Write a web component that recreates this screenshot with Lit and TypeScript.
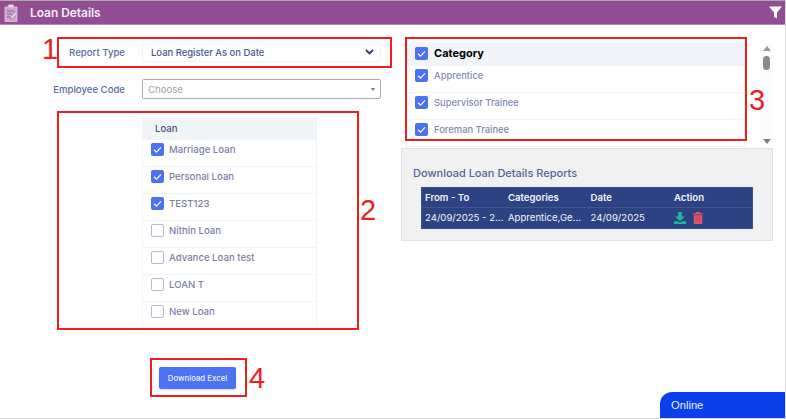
import { LitElement, html, css, svg } from "lit";
import { customElement } from "lit/decorators.js";

const loans: [string, boolean][] = [
  ["Marriage Loan", true],
  ["Personal Loan", true],
  ["TEST123", true],
  ["Nithin Loan", false],
  ["Advance Loan test", false],
  ["LOAN T", false],
  ["New Loan", false],
];
const categories = ["Apprentice", "Supervisor Trainee", "Foreman Trainee"];
const marks = [
  { n: "1", cls: "m1" },
  { n: "2", cls: "m2" },
  { n: "3", cls: "m3" },
  { n: "4", cls: "m4" },
];
const tick = svg`<path d="M3 6.8 5.5 9.2 10 4.4" fill="none" stroke="#fff" stroke-width="1.2"/>`;

@customElement("app-root")
export class AppRoot extends LitElement {
  static styles = css`
    :host {
      display: block;
      position: relative;
      width: 786px;
      height: 419px;
      overflow: hidden;
      background: #fff;
      font-family: "Inter", "Open Sans", sans-serif;
      box-sizing: border-box;
      border-top: 1px solid #a9a9a9;
      border-bottom: 1px solid #d8d8d8;
      border-right: 1px solid #d8d8d8;
    }
    .bar {
      height: 23px;
      background: #914e93;
      border-bottom: 1px solid #b18ab5;
      display: flex;
      align-items: center;
      padding: 0 3px 0 4px;
      color: #f6eef8;
      font-size: 11.9px;
      font-weight: 600;
    }
    .bar .clip { margin-right: 12px; }
    .bar .title { flex: 1; padding-bottom: 1px; }
    .main {
      display: grid;
      grid-template-columns: 401px 372px;
      height: 394px;
    }
    .left {
      display: flex;
      flex-direction: column;
      padding-top: 17px;
    }
    .field {
      display: flex;
      align-items: center;
      height: 20px;
      margin-bottom: 17px;
    }
    .field + .field { margin-bottom: 18px; }
    .label {
      width: 125px;
      text-align: right;
      font-size: 9.6px;
      font-weight: 500;
      color: #5b6c9f;
      margin-right: 17px;
    }
    .select {
      width: 239px;
      height: 20px;
      box-sizing: border-box;
      display: flex;
      align-items: center;
      justify-content: space-between;
      border-radius: 2px;
      font-size: 9.6px;
    }
    .select.plain {
      border: 1px solid #eef1f7;
      padding: 0 6px 0 8px;
      color: #465a8c;
      font-weight: 500;
      font-size: 9.45px;
    }
    .select.choose {
      border: 1px solid #ababab;
      padding: 0 5px 0 5px;
      color: #a2a2a2;
    }
    .tri {
      width: 0;
      height: 0;
      border-left: 2.5px solid transparent;
      border-right: 2.5px solid transparent;
      border-top: 3px solid #777;
    }
    .loans {
      margin-left: 142px;
      width: 175px;
      box-sizing: border-box;
      border: 1px solid #f0f3f8;
      border-width: 0 1px;
    }
    .loans-head {
      height: 23px;
      background: #f1f4f9;
      display: flex;
      align-items: center;
      padding-left: 12px;
      color: #4c5878;
      font-size: 9.6px;
      font-weight: 500;
    }
    .row {
      display: flex;
      align-items: flex-start;
      gap: 5px;
      box-sizing: border-box;
      height: 27px;
      padding: 3px 0 0 8px;
      border-bottom: 1px solid #f0f3f8;
      font-size: 9.6px;
      color: #7b80a6;
      font-weight: 500;
      line-height: 13px;
    }
    .row:last-child { border-bottom: 0; height: 25px; }
    .box {
      width: 13px;
      height: 13px;
      flex: none;
      box-sizing: border-box;
      border-radius: 2px;
      background: #4a72f5;
      display: block;
    }
    .box.off {
      background: #fff;
      border: 1px solid #b6bad0;
    }
    .btn-wrap {
      margin: 40px 0 0 159px;
    }
    .btn {
      width: 77px;
      height: 22px;
      display: flex;
      align-items: center;
      justify-content: center;
      border-radius: 2px;
      background: #4b73f2;
      color: #eef2ff;
      font-size: 7.8px;
      font-weight: 500;
      box-shadow: 0 1px 3px rgba(75, 115, 242, 0.25);
    }
    .right {
      display: flex;
      flex-direction: column;
    }
    .cat-wrap {
      display: flex;
      height: 123px;
      padding-top: 17px;
      box-sizing: border-box;
    }
    .cats {
      margin-left: 5px;
      width: 340px;
      box-sizing: border-box;
      overflow: hidden;
      border: 1px solid #f0f3f8;
      border-width: 0 1px;
    }
    .cat-head {
      height: 24px;
      box-sizing: border-box;
      background: #f1f4f9;
      display: flex;
      align-items: center;
      gap: 6px;
      padding: 0 0 2px 8px;
      color: #000;
      font-size: 11px;
      font-weight: 700;
    }
    .cats .row {
      padding: 3px 0 0 8px;
      gap: 6px;
      color: #7f89b4;
      font-size: 9.4px;
      height: 27px;
    }
    .cats .row:last-child { height: 27px; border-bottom: 1px solid #f0f3f8; }
    .scroll {
      margin-left: 15px;
      width: 13px;
      display: flex;
      flex-direction: column;
      align-items: center;
      padding-top: 4px;
      box-sizing: border-box;
      height: 102px;
      background: #fcfcfc;
    }
    .up {
      border-left: 4px solid transparent;
      border-right: 4px solid transparent;
      border-bottom: 5px solid #9a9a9a;
    }
    .thumb {
      width: 7px;
      height: 14px;
      background: #8a8a8a;
      border-radius: 4px;
      margin-top: 5px;
      flex: none;
    }
    .down {
      margin-top: auto;
      border-left: 4px solid transparent;
      border-right: 4px solid transparent;
      border-top: 5px solid #7d7d7d;
    }
    .panel {
      height: 93px;
      box-sizing: border-box;
      background: #f1f1f1;
      border: 1px solid #e2e2e2;
      padding: 17px 11px 0 11px;
    }
    .panel-title {
      color: #52659b;
      font-size: 11px;
      font-weight: 500;
      line-height: 14px;
      margin-bottom: 7px;
    }
    .tbl {
      margin-left: 8px;
      width: 332px;
      background: #2c4282;
      border: 1px solid #3d5391;
      box-sizing: border-box;
      color: #f2f4fa;
      font-size: 9.6px;
    }
    .tr {
      display: grid;
      grid-template-columns: 83px 82.5px 83.5px 1fr;
      box-sizing: border-box;
      height: 20px;
      padding: 0 0 1px 3px;
      align-items: center;
    }
    .tr.th {
      font-weight: 600;
      border-bottom: 1px solid #3e5391;
    }
    .cell {
      white-space: nowrap;
    }
    .actions {
      display: flex;
      align-items: center;
      gap: 7px;
    }
    .mark-box {
      position: absolute;
      border: 2px solid #f01d1d;
      box-sizing: border-box;
      pointer-events: none;
    }
    .b1 { left: 57px; top: 36px; width: 335px; height: 31px; }
    .b2 { left: 57px; top: 110px; width: 302px; height: 219px; }
    .b3 { left: 405px; top: 36px; width: 342px; height: 104px; }
    .b4 { left: 150px; top: 357px; width: 97px; height: 39px; }
    .digit {
      position: absolute;
      color: #f01d1d;
      font-family: "Liberation Sans", sans-serif;
      font-size: 29px;
      line-height: 30px;
    }
    .m1 { left: 42px; top: 33px; }
    .m2 { left: 360px; top: 194px; }
    .m3 { left: 749px; top: 84px; }
    .m4 { left: 249px; top: 362px; }
    .online {
      position: absolute;
      right: 0;
      bottom: 0;
      width: 125px;
      height: 26px;
      box-sizing: border-box;
      background: #0a3fe9;
      border-top-left-radius: 12px;
      color: #eef2ff;
      font-family: "Liberation Sans", sans-serif;
      font-size: 11.2px;
      padding: 7px 0 0 11px;
    }
  `;

  private box(on: boolean) {
    return html`<svg class="box ${on ? "" : "off"}" viewBox="0 0 13 13">${on ? tick : ""}</svg>`;
  }

  render() {
    return html`
      <div class="bar">
        <svg class="clip" width="14" height="20" viewBox="0 0 14 20">
          <path d="M1 4h3V3h6v1h3v14.5H1z" fill="#c9a6cc" stroke="#e0cbe2" stroke-width=".8"/>
          <rect x="4.5" y="1.5" width="5" height="3" rx="1" fill="#e3d3e6"/>
          <path d="M3 8h7M3 11h5M3 14h3" stroke="#8f5a92" stroke-width="1"/>
          <path d="M6.5 16l.6-2.4 5-5 1.6 1.6-5 5z" fill="#eadcec" stroke="#914e93" stroke-width=".5"/>
        </svg>
        <span class="title">Loan Details</span>
        <svg width="13" height="13" viewBox="0 0 13 13">
          <path d="M0 .5h13L8 6.5V12.5L5 11V6.5z" fill="#fff"/>
        </svg>
      </div>
      <div class="main">
        <div class="left">
          <div class="field">
            <div class="label">Report Type</div>
            <div class="select plain">
              <span>Loan Register As on Date</span>
              <svg width="9" height="6" viewBox="0 0 9 6">
                <path d="M1 1l3.5 3.5L8 1" fill="none" stroke="#2c3f6e" stroke-width="1.8"/>
              </svg>
            </div>
          </div>
          <div class="field">
            <div class="label">Employee Code</div>
            <div class="select choose"><span>Choose</span><i class="tri"></i></div>
          </div>
          <div class="loans">
            <div class="loans-head">Loan</div>
            ${loans.map(([n, on]) => html`<div class="row">${this.box(on)}<span>${n}</span></div>`)}
          </div>
          <div class="btn-wrap"><div class="btn">Download Excel</div></div>
        </div>
        <div class="right">
          <div class="cat-wrap">
            <div class="cats">
              <div class="cat-head">${this.box(true)}<span>Category</span></div>
              ${categories.map((c) => html`<div class="row">${this.box(true)}<span>${c}</span></div>`)}
            </div>
            <div class="scroll">
              <i class="up"></i><i class="thumb"></i><i class="down"></i>
            </div>
          </div>
          <div class="panel">
            <div class="panel-title">Download Loan Details Reports</div>
            <div class="tbl">
              <div class="tr th">
                <div class="cell">From - To</div>
                <div class="cell">Categories</div>
                <div class="cell">Date</div>
                <div class="cell">Action</div>
              </div>
              <div class="tr">
                <div class="cell">24/09/2025 - 2...</div>
                <div class="cell">Apprentice,Ge...</div>
                <div class="cell">24/09/2025</div>
                <div class="actions">
                  <svg width="12" height="12" viewBox="0 0 12 12">
                    <path d="M4.2 0h3.6v4.5H11L6 9 1 4.5h3.2z" fill="#1fb5a3"/>
                    <path d="M0 9.2h3.4L6 10.6l2.6-1.4H12V12H0z" fill="#1fb5a3"/>
                  </svg>
                  <svg width="10" height="12" viewBox="0 0 10 12">
                    <path d="M0 1.2h3V0h4v1.2h3v1.3H0z" fill="#e0566b"/>
                    <path d="M.8 3.2h8.4V12H.8z" fill="#e0566b"/>
                    <path d="M3.2 4.5v6M5 4.5v6M6.8 4.5v6" stroke="#b93f53" stroke-width=".6"/>
                  </svg>
                </div>
              </div>
            </div>
          </div>
        </div>
      </div>
      <i class="mark-box b1"></i>
      <i class="mark-box b2"></i>
      <i class="mark-box b3"></i>
      <i class="mark-box b4"></i>
      ${marks.map((m) => html`<span class="digit ${m.cls}">${m.n}</span>`)}
      <div class="online">Online</div>
    `;
  }
}
